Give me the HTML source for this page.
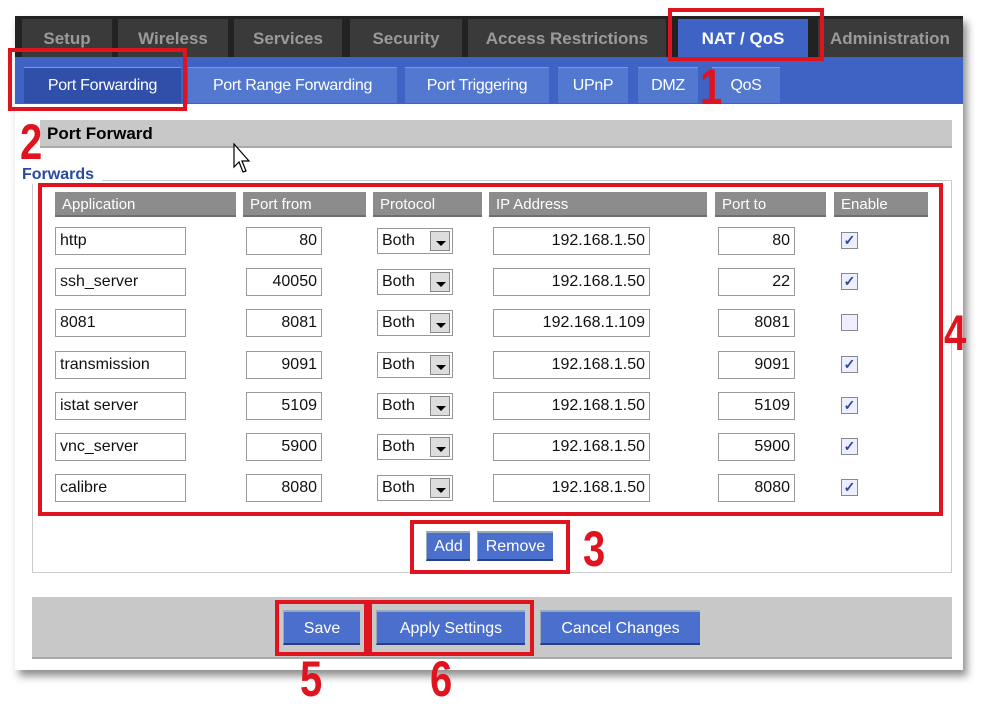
<!DOCTYPE html>
<html><head><style>
*{margin:0;padding:0;box-sizing:border-box}
body{width:984px;height:694px;background:#fff;position:relative;overflow:hidden;font-family:"Liberation Sans",sans-serif}
.a{position:absolute}
.panel{left:15px;top:16px;width:948px;height:654px;background:#fff;box-shadow:4px 6px 8px rgba(0,0,0,.45)}
.top{left:15px;top:16px;width:948px;height:42px;background:#222;overflow:hidden}
.tt{top:3px;height:39px;background:#3a3a3a;color:#9a9a9a;font-weight:bold;font-size:17px;line-height:39px;text-align:center;white-space:nowrap}
.sub{left:15px;top:57px;width:948px;height:47px;background:#3e63c4}
.st{top:67px;height:36px;background:#5378d0;color:#fff;font-size:16px;line-height:36px;text-align:center;border-top:1px solid #7a98e0;letter-spacing:-.3px}
.red{border:4px solid #e0141e}
.num{color:#e0141e;font-weight:bold;font-size:50px;line-height:1;transform:scaleX(.8);transform-origin:left top}
.th{top:192px;height:25px;background:#8c8c8c;color:#fff;font-size:15px;line-height:25px;padding-left:7px;border-bottom:2px solid #6f6f6f}
.in{height:28px;border:1px solid #9a9a9a;background:#fff;font-size:16px;line-height:26px;padding:0 4px;color:#111}
.r{text-align:right}
.sel{height:26px;width:76px;border:1px solid #999;font-size:16px;line-height:24px;padding-left:4px;color:#111;background:#fff}
.sel i{position:absolute;right:2px;top:2px;width:20px;height:20px;background:#ddd;border:1px solid #888}
.sel i:after{content:"";position:absolute;left:5px;top:9px;border-left:5px solid transparent;border-right:5px solid transparent;border-top:5px solid #000}
.cb{width:17px;height:17px;border:1px solid #888;background:#eef;color:#2a4aa0;font-size:14px;line-height:15px;text-align:center;font-weight:bold}
.btn{height:32px;background:#4a6fcc;color:#fff;font-size:16px;line-height:32px;text-align:center;border-top:2px solid #9ab;border-left:1px solid #9ab;border-bottom:2px solid #2a3f80}
</style></head><body>
<div class="a panel"></div>
<div class="a top">
<div class="a tt" style="left:7px;width:90px">Setup</div>
<div class="a tt" style="left:103px;width:110px">Wireless</div>
<div class="a tt" style="left:219px;width:108px">Services</div>
<div class="a tt" style="left:335px;width:112px">Security</div>
<div class="a tt" style="left:453px;width:198px">Access Restrictions</div>
<div class="a tt" style="left:663px;width:130px;background:#3e63c4;color:#fff">NAT / QoS</div>
<div class="a tt" style="left:803px;width:160px;text-align:left;padding-left:12px">Administration</div>
</div>
<div class="a sub"></div>
<div class="a st" style="left:24px;width:157px;background:#2f4fa8">Port Forwarding</div>
<div class="a st" style="left:188px;width:209px">Port Range Forwarding</div>
<div class="a st" style="left:405px;width:144px">Port Triggering</div>
<div class="a st" style="left:558px;width:70px">UPnP</div>
<div class="a st" style="left:638px;width:60px">DMZ</div>
<div class="a st" style="left:712px;width:68px">QoS</div>
<div class="a red" style="left:668px;top:8px;width:156px;height:53px"></div>
<div class="a red" style="left:8px;top:48px;width:179px;height:63px"></div>
<div class="a num" style="left:700px;top:62px">1</div>
<div class="a" style="left:40px;top:120px;width:912px;height:28px;background:#c8c8c8;border-bottom:2px solid #aaa;font-weight:bold;font-size:17px;line-height:28px;padding-left:7px">Port Forward</div>
<div class="a num" style="left:20px;top:117px">2</div>
<div class="a" style="left:32px;top:180px;width:920px;height:393px;border:1px solid #ccc"></div>
<div class="a" style="left:22px;top:166px;background:#fff;color:#2a4aa0;font-weight:bold;font-size:16px;padding-right:8px">Forwards</div>
<div class="a th" style="left:55px;width:181px">Application</div>
<div class="a th" style="left:243px;width:123px">Port from</div>
<div class="a th" style="left:373px;width:109px">Protocol</div>
<div class="a th" style="left:489px;width:218px">IP Address</div>
<div class="a th" style="left:715px;width:111px">Port to</div>
<div class="a th" style="left:834px;width:94px">Enable</div>
<div id="rows"></div>
<script>
var d=[["http","80","192.168.1.50","80",1],["ssh_server","40050","192.168.1.50","22",1],["8081","8081","192.168.1.109","8081",0],["transmission","9091","192.168.1.50","9091",1],["istat server","5109","192.168.1.50","5109",1],["vnc_server","5900","192.168.1.50","5900",1],["calibre","8080","192.168.1.50","8080",1]];
var h="";d.forEach(function(r,i){var y=227+i*41.2;
h+='<div class="a in" style="left:55px;top:'+y+'px;width:131px">'+r[0]+'</div>';
h+='<div class="a in r" style="left:246px;top:'+y+'px;width:76px">'+r[1]+'</div>';
h+='<div class="a sel" style="left:377px;top:'+(y+1)+'px">Both<i></i></div>';
h+='<div class="a in r" style="left:493px;top:'+y+'px;width:157px">'+r[2]+'</div>';
h+='<div class="a in r" style="left:718px;top:'+y+'px;width:77px">'+r[3]+'</div>';
h+='<div class="a cb" style="left:841px;top:'+(y+5)+'px">'+(r[4]?'&#10003;':'')+'</div>';});
document.getElementById("rows").innerHTML=h;
</script>
<div class="a red" style="left:38px;top:183px;width:905px;height:333px"></div>
<div class="a num" style="left:944px;top:308px">4</div>
<div class="a btn" style="left:426px;top:531px;width:44px;height:30px;line-height:28px">Add</div>
<div class="a btn" style="left:477px;top:531px;width:76px;height:30px;line-height:28px">Remove</div>
<div class="a red" style="left:410px;top:520px;width:160px;height:54px"></div>
<div class="a num" style="left:583px;top:524px">3</div>
<div class="a" style="left:32px;top:597px;width:920px;height:62px;background:#c8c8c8;border-bottom:2px solid #aaa"></div>
<div class="a btn" style="left:283px;top:610px;width:77px;height:35px;line-height:33px">Save</div>
<div class="a btn" style="left:376px;top:610px;width:149px;height:35px;line-height:33px">Apply Settings</div>
<div class="a btn" style="left:540px;top:610px;width:160px;height:35px;line-height:33px">Cancel Changes</div>
<div class="a red" style="left:275px;top:600px;width:93px;height:56px"></div>
<div class="a red" style="left:368px;top:600px;width:166px;height:56px"></div>
<div class="a num" style="left:300px;top:654px">5</div>
<div class="a num" style="left:430px;top:654px">6</div>
<svg class="a" style="left:233px;top:143px" width="20" height="32" viewBox="0 0 20 32"><path d="M1 1 L1 24 L6 19 L10 29 L13 28 L9 18 L16 18 Z" fill="#fff" stroke="#000" stroke-width="1.2"/></svg>
</body></html>
